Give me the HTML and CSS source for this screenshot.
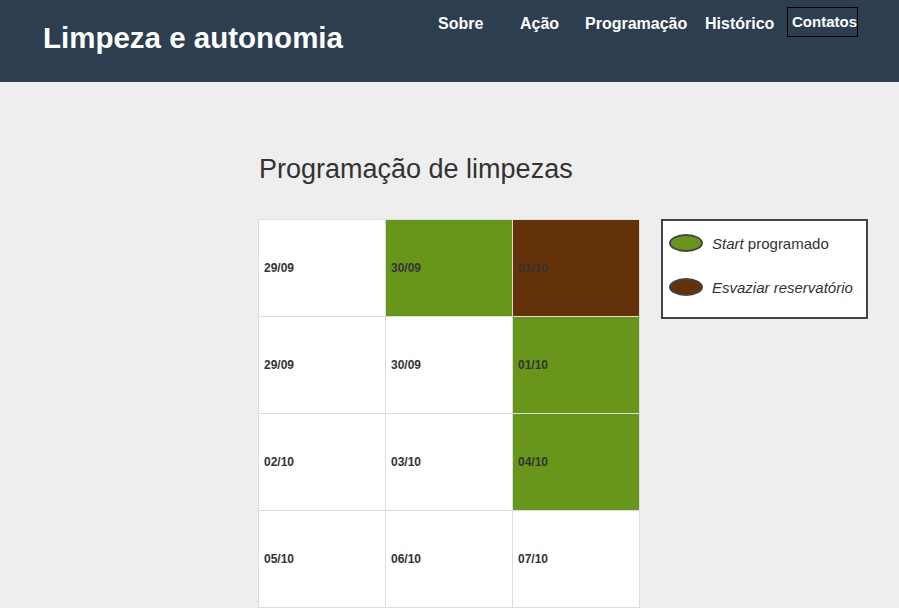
FILE: index.html
```html
<!DOCTYPE html>
<html lang="pt">
<head>
<meta charset="utf-8">
<title>Limpeza e autonomia</title>
<link rel="stylesheet" href="styles.css">
</head>
<body>
<header class="topbar">
  <h1 class="brand">Limpeza e autonomia</h1>
  <nav class="nav">
    <a class="nav-link w-sobre" href="#">Sobre</a>
    <a class="nav-link w-acao" href="#">Ação</a>
    <a class="nav-link w-prog" href="#">Programação</a>
    <a class="nav-link w-hist" href="#">Histórico</a>
    <a class="nav-contact" href="#">Contatos</a>
  </nav>
</header>
<main class="content">
  <h2 class="title">Programação de limpezas</h2>
  <div class="schedule-row">
    <div class="calendar">
      <div class="cell">29/09</div>
      <div class="cell start">30/09</div>
      <div class="cell empty">01/10</div>
      <div class="cell">29/09</div>
      <div class="cell">30/09</div>
      <div class="cell start">01/10</div>
      <div class="cell">02/10</div>
      <div class="cell">03/10</div>
      <div class="cell start">04/10</div>
      <div class="cell">05/10</div>
      <div class="cell">06/10</div>
      <div class="cell">07/10</div>
    </div>
    <div class="legend">
      <div class="legend-item"><span class="dot dot-start"></span><span><em>Start</em> programado</span></div>
      <div class="legend-item"><span class="dot dot-empty"></span><span><em>Esvaziar reservatório</em></span></div>
    </div>
  </div>
</main>
</body>
</html>
```

FILE: styles.css
```css
* { box-sizing: border-box; }

body {
  margin: 0;
  background: #eeeeee;
  font-family: "Liberation Sans", Arial, sans-serif;
  color: #333333;
}

.topbar {
  height: 82px;
  background: #2c3e50;
  display: flex;
  justify-content: space-between;
  align-items: flex-start;
  padding: 0 41px 0 43px;
}

.brand {
  margin: 21px 0 0 0;
  font-size: 29.5px;
  line-height: 34px;
  font-weight: bold;
  color: #ffffff;
}

.nav {
  display: flex;
  align-items: flex-start;
}

.nav-link {
  display: block;
  padding-top: 14px;
  font-size: 16px;
  line-height: 19px;
  font-weight: bold;
  color: #ffffff;
  text-decoration: none;
}

.w-sobre { width: 82px; }
.w-acao { width: 65px; }
.w-prog { width: 120px; }
.w-hist { width: 82px; }

.nav-contact {
  display: block;
  width: 71px;
  margin-top: 7px;
  border: 1px solid #000000;
  padding: 5px 0 6px 4px;
  font-size: 15px;
  line-height: 17px;
  font-weight: bold;
  color: #ffffff;
  text-decoration: none;
  white-space: nowrap;
}

.content {
  padding: 72px 0 0 258px;
}

.title {
  margin: 0 0 0 1px;
  font-size: 27px;
  line-height: 31px;
  font-weight: normal;
  color: #333333;
}

.schedule-row {
  display: flex;
  align-items: flex-start;
  gap: 21px;
  margin-top: 34px;
}

.calendar {
  display: grid;
  grid-template-columns: repeat(3, 126px);
  grid-auto-rows: 96px;
  gap: 1px;
  background: #dddddd;
  border: 1px solid #dddddd;
}

.cell {
  background: #ffffff;
  display: flex;
  align-items: center;
  padding-left: 5px;
  font-size: 12px;
  font-weight: bold;
  color: #333333;
}

.cell.start { background: #67961b; }
.cell.empty { background: #633208; }

.legend {
  width: 207px;
  height: 100px;
  background: #ffffff;
  border: 2px solid #444444;
  padding: 13px 6px 0 6px;
  display: flex;
  flex-direction: column;
  gap: 26px;
}

.legend-item {
  display: flex;
  align-items: center;
  gap: 9px;
  height: 18px;
  font-size: 15px;
  color: #333333;
}

.dot {
  width: 34px;
  height: 18px;
  border-radius: 50%;
  border: 2px solid #444444;
  flex: none;
}

.dot-start { background: #67961b; }
.dot-empty { background: #633208; }
```
